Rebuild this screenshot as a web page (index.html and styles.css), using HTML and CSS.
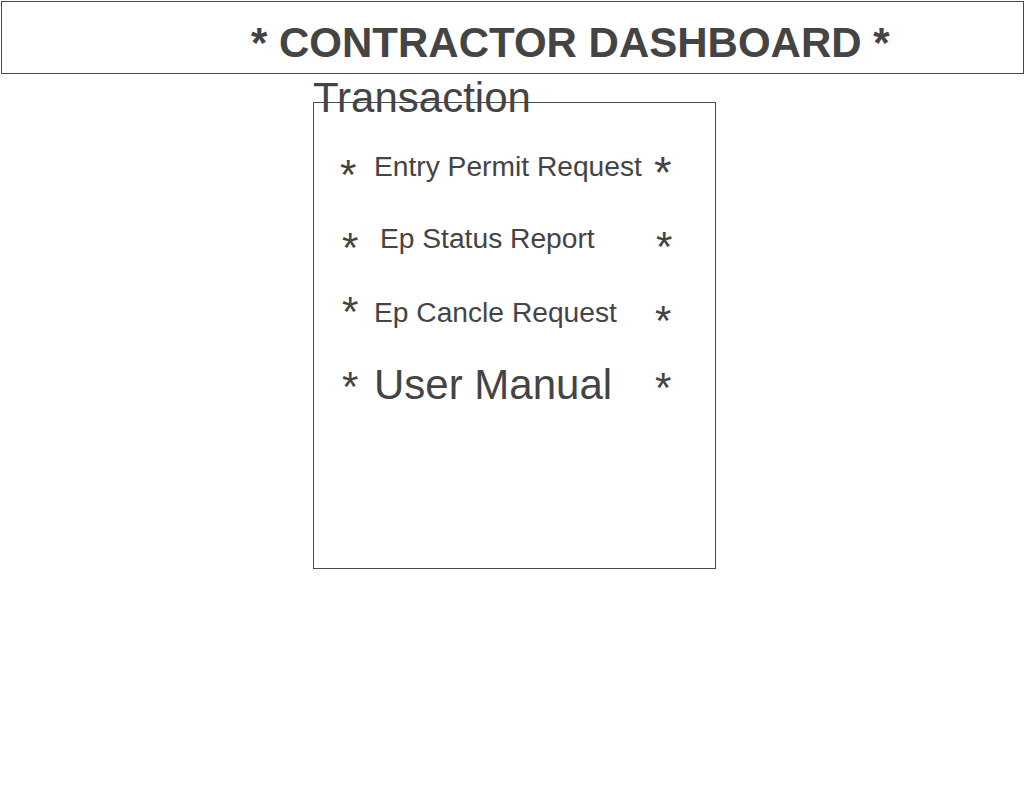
FILE: index.html
```html
<!DOCTYPE html>
<html lang="en">
<head>
<meta charset="utf-8">
<title>Contractor Dashboard</title>
<link rel="stylesheet" href="styles.css">
</head>
<body>
  <header class="header">
    <h1 class="title">* CONTRACTOR DASHBOARD *</h1>
  </header>
  <main class="main">
    <h2 class="section-title">Transaction</h2>
    <nav class="panel">
      <div class="row row-1">
        <span class="star star-1l">*</span>
        <a class="label label-1">Entry Permit Request</a>
        <span class="star star-1r">*</span>
      </div>
      <div class="row row-2">
        <span class="star star-2l">*</span>
        <a class="label label-indent">Ep Status Report</a>
        <span class="star star-2r">*</span>
      </div>
      <div class="row row-3">
        <span class="star star-3l">*</span>
        <a class="label label-3">Ep Cancle Request</a>
        <span class="star star-3r">*</span>
      </div>
      <div class="row row-4">
        <span class="star star-4l">*</span>
        <a class="label label-big">User Manual</a>
        <span class="star star-4r">*</span>
      </div>
    </nav>
  </main>
</body>
</html>
```

FILE: styles.css
```css
* {
  box-sizing: border-box;
}

html, body {
  margin: 0;
  padding: 0;
  background: #ffffff;
}

body {
  font-family: "Liberation Sans", Arial, sans-serif;
  color: #444444;
}

.header {
  margin: 1px 0 0 1px;
  width: 1023px;
  height: 73px;
  border: 1px solid #4a4a4a;
  padding: 17px 0 0 249px;
}

.title {
  margin: 0;
  font-size: 42px;
  line-height: 48px;
  font-weight: bold;
  white-space: nowrap;
}

.main {
  padding-left: 313px;
}

.section-title {
  margin: 0 0 -20px 0;
  font-size: 42px;
  line-height: 48px;
  font-weight: normal;
  white-space: nowrap;
}

.panel {
  display: flex;
  flex-direction: column;
  width: 403px;
  height: 467px;
  border: 1px solid #4a4a4a;
  padding: 46px 0 0 27px;
}

.row {
  display: grid;
  grid-template-columns: 33px 281px auto;
  align-items: start;
}

.row-2 { margin-top: 25px; }
.row-3 { margin-top: 22px; }
.row-4 { margin-top: 18px; }

.label {
  font-size: 28.2px;
  line-height: 32px;
  white-space: nowrap;
  color: #444444;
}

.label-1 { margin-top: 1px; }
.label-indent { margin-left: 6px; margin-top: 1px; }
.label-3 { margin-top: 5px; }

.label-big {
  font-size: 42px;
  line-height: 48px;
  margin-top: 1px;
}

.star {
  font-size: 42px;
  line-height: 42px;
  height: 42px;
}

.star-1l { margin-top: 5px; margin-left: -1px; }
.star-1r { margin-top: 3px; font-size: 45px; margin-left: -1px; }
.star-2l { margin-top: 6px; margin-left: 1px; }
.star-2r { margin-top: 5px; margin-left: 1px; }
.star-3l { margin-top: 0; margin-left: 1px; }
.star-3r { margin-top: 9px; margin-left: 0; }
.star-4l { margin-top: 6px; margin-left: 1px; }
.star-4r { margin-top: 7px; margin-left: 0; }
```
